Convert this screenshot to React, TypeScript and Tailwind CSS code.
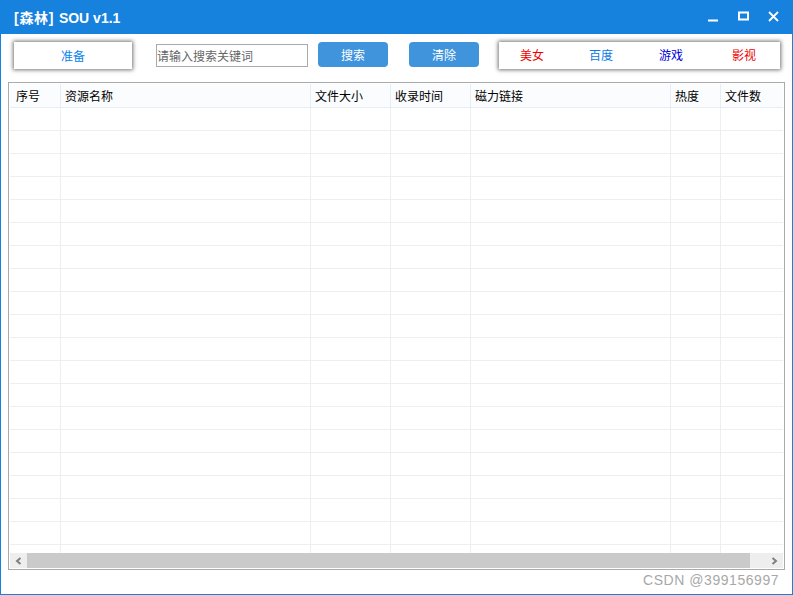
const cols = [
  { w: "w-[51px]", label: "序号", pl: "pl-[6px]" },
  { w: "w-[250px]", label: "资源名称", pl: "pl-[4px]" },
  { w: "w-[80px]", label: "文件大小", pl: "pl-[4px]" },
  { w: "w-[80px]", label: "收录时间", pl: "pl-[4px]" },
  { w: "w-[200px]", label: "磁力链接", pl: "pl-[4px]" },
  { w: "w-[50px]", label: "热度", pl: "pl-[4px]" },
  { w: "w-[65px]", label: "文件数", pl: "pl-[4px]" },
];
const rows = Array.from({ length: 20 }, (_, i) => i);
const font = { fontFamily: '"Noto Sans CJK SC", "Liberation Sans", sans-serif' };

function Chevron({ dir }: { dir: "l" | "r" }) {
  return (
    <svg width="8" height="8" viewBox="0 0 8 8" fill="none" stroke="#808080" strokeWidth="2">
      <path d={dir === "l" ? "M5.5 1 L2 4 L5.5 7" : "M2.5 1 L6 4 L2.5 7"} />
    </svg>
  );
}

export default function App() {
  return (
    <div
      className="relative w-[793px] h-[595px] flex flex-col bg-white border border-[#1781de] overflow-hidden"
      style={font}
    >
      <div className="h-[33px] shrink-0 bg-[#1781de] flex items-center justify-between text-white">
        <div className="pl-[13px] text-[14px] font-bold leading-none whitespace-pre" style={{ fontFamily: '"Liberation Sans", "Noto Sans CJK SC", sans-serif' }}>
          <span className="tracking-[0.73px]">{"[森林] "}</span>
          <span>SOU v1.1</span>
        </div>
        <div className="flex items-center gap-[19px] pr-[13px] -mt-[2px]">
          <svg width="11" height="11" viewBox="0 0 11 11"><rect x="0" y="8.5" width="10" height="2" fill="#fff" /></svg>
          <svg width="11" height="11" viewBox="0 0 11 11" fill="none" stroke="#fff" strokeWidth="2"><rect x="1" y="1.5" width="9" height="7" /></svg>
          <svg width="11" height="11" viewBox="0 0 11 11" fill="none" stroke="#fff" strokeWidth="1.8"><path d="M1 1 L10 10 M10 1 L1 10" /></svg>
        </div>
      </div>

      <div className="h-[48px] shrink-0 flex items-start pl-[13px] pt-[8px]">
        <div className="w-[118px] h-[27px] flex items-center justify-center bg-white text-[#0a84ee] text-[12px] shadow-[0_0_4px_1px_rgba(0,0,0,0.55)]">
          准备
        </div>
        <div className="mt-[2px] ml-[24px] w-[152px] h-[23px] border border-[#aaaaaa] flex items-center text-[12px] text-[#666666]">
          请输入搜索关键词
        </div>
        <div className="ml-[10px] w-[70px] h-[25px] rounded-[4px] bg-[#3f94dc] flex items-center justify-center text-[12px] text-white">
          搜索
        </div>
        <div className="ml-[21px] w-[70px] h-[25px] rounded-[4px] bg-[#3f94dc] flex items-center justify-center text-[12px] text-white">
          清除
        </div>
        <div className="ml-[20px] w-[281px] h-[27px] flex items-center pl-[21px] bg-white text-[12px] shadow-[0_0_4px_1px_rgba(0,0,0,0.55)]">
          <div className="text-[#ee0000] -mt-[2px]">美女</div>
          <div className="ml-[45px] text-[#0a7ae6] -mt-[2px]">百度</div>
          <div className="ml-[46px] text-[#0000dd] -mt-[2px]">游戏</div>
          <div className="ml-[49px] text-[#ee0000] -mt-[2px]">影视</div>
        </div>
      </div>

      <div className="ml-[7px] w-[777px] h-[488px] border border-[#aaaaaa] flex flex-col p-[1px] bg-white">
        <div className="flex-1 overflow-hidden min-h-0">
          <div className="flex h-[24px] bg-[#fbfcfd] border-b border-[#e6edf6] text-[12px] text-black">
            {cols.map((c) => (
              <div key={c.label} className={`${c.w} ${c.pl} shrink-0 flex items-center border-r border-[#e6edf6] last:border-r-0`}>
                {c.label}
              </div>
            ))}
          </div>
          {rows.map((r) => (
            <div key={r} className="flex h-[23px] border-b border-[#eeeeee]">
              {cols.map((c) => (
                <div key={c.label} className={`${c.w} shrink-0 border-r border-[#eeeeee] last:border-r-0`} />
              ))}
            </div>
          ))}
        </div>
        <div className="h-[15px] shrink-0 flex bg-[#eeeeee]">
          <div className="w-[17px] flex items-center justify-center"><Chevron dir="l" /></div>
          <div className="w-[723px] bg-[#cacaca]" />
          <div className="flex-1 flex items-center justify-end pr-[5px]"><Chevron dir="r" /></div>
        </div>
      </div>

      <div
        className="absolute left-[642px] top-[571px] text-[14px] leading-[16px] tracking-[0.55px] text-[#a8a8a8]"
        style={{ fontFamily: '"Liberation Sans", sans-serif' }}
      >
        CSDN @399156997
      </div>
    </div>
  );
}
